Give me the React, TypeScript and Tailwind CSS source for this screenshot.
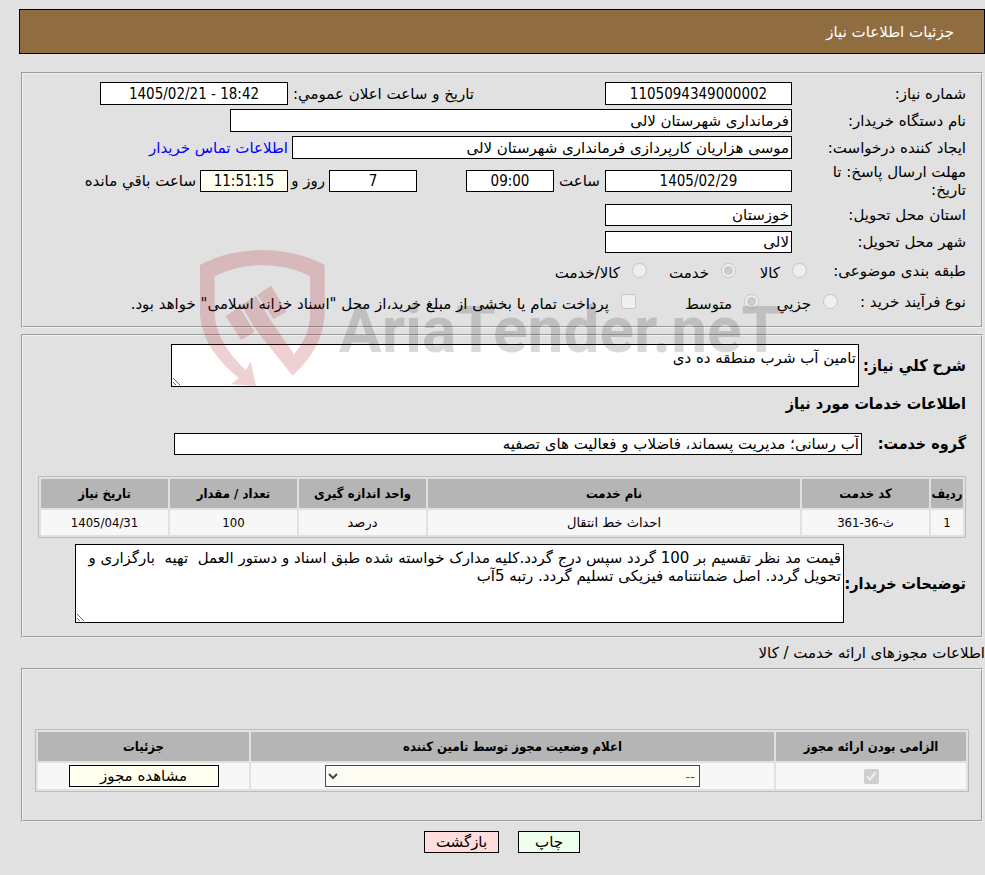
import React from 'react';

const inputBase = 'border border-black bg-white px-[2px]';
const narrow = "font-['DejaVu_Sans_Condensed','DejaVu_Sans',sans-serif]";
const panel =
  'mx-[2px] min-w-0 border-2 border-[#f0f0f0] [border-style:groove]';

type FieldProps = {
  id: string;
  label: string;
  children: React.ReactNode;
};

// Row with a fixed label column on the right
const Field: React.FC<FieldProps> = ({ id, label, children }) => (
  <div className="flex items-end">
    <div className="w-[174px] shrink-0 self-center">
      <label htmlFor={id} className="block w-[144px]">
        {label}
      </label>
    </div>
    {children}
  </div>
);

type ChoiceProps = {
  name?: string;
  type?: 'radio' | 'checkbox';
  label: string;
  checked?: boolean;
};

const Choice: React.FC<ChoiceProps> = ({ name, type = 'radio', label, checked = false }) => (
  <label className="flex items-center gap-3 whitespace-nowrap">
    <input type={type} name={name} disabled defaultChecked={checked} className="h-[15px] w-[15px] shrink-0" />
    <span className="pt-1">{label}</span>
  </label>
);

const Watermark: React.FC = () => (
  <svg
    className="pointer-events-none absolute left-[200px] top-[250px] h-[136px] w-[600px] [direction:ltr]"
    viewBox="60 45 1800 408"
    aria-hidden="true"
  >
    <g fill="rgb(175,25,35)" fillOpacity="0.2">
      <path d="M60 90C117 60 180 45 247 45S377 60 434 90V240C430 310 395 370 338 422L228 284L272 256L342 358C370 325 390 285 390 240V124C345 101 298 91 247 91S149 101 104 124V240C108 300 148 360 198 405L212 380L228 453L152 448L176 429C105 370 66 310 60 240Z" />
      <path d="M137 244L178 216L224 290L184 315Z" />
      <path d="M183 210L228 183L272 256L228 284Z" />
      <path d="M232 180L273 152L320 230L280 252Z" />
    </g>
    <text
      x="476"
      y="350"
      fontSize="192"
      fontWeight="bold"
      className="fill-black/15 font-['Roboto',sans-serif]"
    >
      AriaTender.neT
    </text>
  </svg>
);

const serviceHeads = [
  { title: 'ردیف', width: 'w-[32px]' },
  { title: 'کد خدمت', width: 'w-[127px]' },
  { title: 'نام خدمت', width: '' },
  { title: 'واحد اندازه گیری', width: 'w-[127px]' },
  { title: 'تعداد / مقدار', width: 'w-[127px]' },
  { title: 'تاریخ نیاز', width: 'w-[127px]' },
];

const services = [['1', 'ث-36-361', 'احداث خط انتقال', 'درصد', '100', '1405/04/31']];

const th = `h-[29px] bg-[#b5b5b5] p-0 text-center text-[13px] font-bold whitespace-nowrap ${narrow}`;
const tableBase = 'w-full table-fixed border-separate border-spacing-[2px] border border-[#bdbdbd]';
const strong = `shrink-0 text-base leading-[18px] font-bold whitespace-nowrap ${narrow}`;

const App: React.FC = () => {
  return (
    <div
      dir="rtl"
      lang="fa"
      className="relative min-h-screen bg-[#e1e1e1] pt-[9px] pb-[22px] pl-[19px] font-['DejaVu_Sans',sans-serif] text-[15px] leading-[18px] text-black"
    >
      <header className="mb-[18px] flex h-[45px] items-center border border-black bg-[#8f6d40] px-[30px] text-white">
        <h1>جزئیات اطلاعات نیاز</h1>
      </header>

      <main>
        {/* General information */}
        <fieldset className={`${panel} mb-[6px] flex flex-col gap-1 px-[15px] pt-2 pb-[11px]`}>
          <Field id="need-no" label="شماره نیاز:">
            <input id="need-no" readOnly defaultValue="1105094349000002" className={`${inputBase} ${narrow} h-[23px] w-[187px] text-center`} />
            <label htmlFor="announce" className="mr-[131px] w-[186px] self-center whitespace-nowrap">
              تاریخ و ساعت اعلان عمومي:
            </label>
            <input id="announce" dir="ltr" readOnly defaultValue="1405/02/21 - 18:42" className={`${inputBase} ${narrow} h-[23px] w-[188px] text-center`} />
          </Field>
          <Field id="buyer" label="نام دستگاه خریدار:">
            <input id="buyer" readOnly defaultValue="فرمانداری شهرستان لالی" className={`${inputBase} h-[23px] w-[562px]`} />
          </Field>
          <Field id="creator" label="ایجاد کننده درخواست:">
            <input id="creator" readOnly defaultValue="موسی هزاریان کارپردازی فرمانداری شهرستان لالی" className={`${inputBase} h-[23px] w-[500px]`} />
            <a href="#contact" className="mr-1 self-center whitespace-nowrap text-[#0000ff]">
              اطلاعات تماس خریدار
            </a>
          </Field>
          <Field id="deadline" label="مهلت ارسال پاسخ: تا تاریخ:">
            <div className="flex items-center self-center">
              <input id="deadline" dir="ltr" readOnly defaultValue="1405/02/29" className={`${inputBase} ${narrow} h-[22px] w-[187px] text-center`} />
              <label htmlFor="hour" className="w-[51px] text-center">ساعت</label>
              <input id="hour" readOnly defaultValue="09:00" className={`${inputBase} ${narrow} h-[22px] w-[88px] text-center`} />
              <input id="days" readOnly defaultValue="7" className={`${inputBase} ${narrow} mr-[49px] h-[22px] w-[88px] text-center`} />
              <label htmlFor="days" className="w-[41px] pr-1 whitespace-nowrap">روز و</label>
              <input id="left" readOnly defaultValue="11:51:15" className={`${narrow} h-[22px] w-[88px] border border-black bg-[#fffff0] px-[2px] text-center`} />
              <label htmlFor="left" className="mr-1 whitespace-nowrap">ساعت باقي مانده</label>
            </div>
          </Field>
          <Field id="province" label="استان محل تحویل:">
            <div className="flex h-[23px] items-end">
              <input id="province" readOnly defaultValue="خوزستان" className={`${inputBase} h-[22px] w-[187px]`} />
            </div>
          </Field>
          <Field id="city" label="شهر محل تحویل:">
            <div className="flex h-[23px] items-end">
              <input id="city" readOnly defaultValue="لالی" className={`${inputBase} h-[22px] w-[187px]`} />
            </div>
          </Field>
          <div className="flex h-[27px] items-center" role="radiogroup" aria-label="طبقه بندی موضوعی">
            <span className="w-[159px] shrink-0">طبقه بندی موضوعی:</span>
            <div className="w-[71px]"><Choice name="category" label="کالا" /></div>
            <div className="w-[89px]"><Choice name="category" label="خدمت" checked /></div>
            <Choice name="category" label="کالا/خدمت" />
          </div>
          <div className="flex h-[27px] items-center">
            <span className="w-[128px] shrink-0">نوع فرآیند خرید :</span>
            <div className="w-[79px] shrink-0"><Choice name="process" label="جزیي" /></div>
            <div className="w-[123px] shrink-0"><Choice name="process" label="متوسط" checked /></div>
            <Choice type="checkbox" label={'پرداخت تمام یا بخشی از مبلغ خرید،از محل "اسناد خزانه اسلامی" خواهد بود.'} />
          </div>
        </fieldset>

        {/* Requested services */}
        <fieldset className={`${panel} px-[15px] pt-2 pb-[13px]`}>
          <div className="flex items-center">
            <label htmlFor="summary" className={`${strong} w-[107px]`}>شرح کلي نیاز:</label>
            <textarea id="summary" readOnly defaultValue="تامین آب شرب منطقه ده دی" className={`${inputBase} block h-[43px] w-[688px] py-[4px]`} />
          </div>
          <h2 className={`${strong} mt-2 mb-[20px]`}>اطلاعات خدمات مورد نیاز</h2>
          <div className="flex items-center">
            <label htmlFor="group" className={`${strong} w-[104px]`}>گروه خدمت:</label>
            <input id="group" readOnly defaultValue="آب رسانی؛ مدیریت پسماند، فاضلاب و فعالیت های تصفیه" className={`${inputBase} h-[22px] w-[688px]`} />
          </div>
          <table className={`${tableBase} mt-[21px] mb-[6px]`}>
            <thead>
              <tr>
                {serviceHeads.map((h) => (
                  <th key={h.title} className={`${th} ${h.width}`}>{h.title}</th>
                ))}
              </tr>
            </thead>
            <tbody>
              {services.map((row) => (
                <tr key={row[0]}>
                  {row.map((cell, i) => (
                    <td
                      key={i}
                      className={`h-[25px] bg-[#f7f7f7] p-0 text-center text-[13px] ${/\d/.test(cell) ? narrow : ''}`}
                    >
                      {cell}
                    </td>
                  ))}
                </tr>
              ))}
            </tbody>
          </table>
          <div className="flex items-center">
            <label htmlFor="notes" className={`${strong} w-[122px]`}>توضیحات خریدار:</label>
            <textarea
              id="notes"
              readOnly
              defaultValue="قیمت مد نظر تقسیم بر 100 گردد سپس درج گردد.کلیه مدارک خواسته شده طبق اسناد و دستور العمل  تهیه  بارگزاری و تحویل گردد. اصل ضمانتنامه فیزیکی تسلیم گردد. رتبه 5آب"
              className={`${inputBase} block h-[79px] w-[769px] py-[4px]`}
            />
          </div>
        </fieldset>

        {/* Licences */}
        <h2 className="flex h-[30px] items-center">اطلاعات مجوزهای ارائه خدمت / کالا</h2>
        <fieldset className={`${panel} px-[12px] pt-[59px] pb-[28px]`}>
          <table className={tableBase}>
            <thead>
              <tr>
                <th className={`${th} w-[190px]`}>الزامی بودن ارائه مجوز</th>
                <th className={th}>اعلام وضعیت مجوز توسط تامین کننده</th>
                <th className={`${th} w-[211px]`}>جزئیات</th>
              </tr>
            </thead>
            <tbody>
              <tr>
                <td className="h-[26px] bg-[#f7f7f7] p-0">
                  <input type="checkbox" aria-label="الزامی بودن ارائه مجوز" disabled defaultChecked className="mx-auto block h-[15px] w-[15px]" />
                </td>
                <td className="bg-[#f7f7f7] p-0">
                  <select aria-label="وضعیت مجوز" disabled className="mx-auto block h-[22px] w-[375px] border border-black bg-[#fffff0] text-[13px] opacity-70">
                    <option>--</option>
                  </select>
                </td>
                <td className="bg-[#f7f7f7] p-0">
                  <button type="button" className="mx-auto block h-[22px] w-[150px] border border-black bg-[#fffff0]">مشاهده مجوز</button>
                </td>
              </tr>
            </tbody>
          </table>
        </fieldset>
      </main>

      <div className="mt-[9px] flex justify-center gap-[19px]">
        <button type="button" className="h-[22px] w-[62px] border border-black bg-[#eeffee]">چاپ</button>
        <button type="button" className="h-[22px] w-[75px] border border-black bg-[#ffdddd]">بازگشت</button>
      </div>

      <Watermark />
    </div>
  );
};

export default App;
